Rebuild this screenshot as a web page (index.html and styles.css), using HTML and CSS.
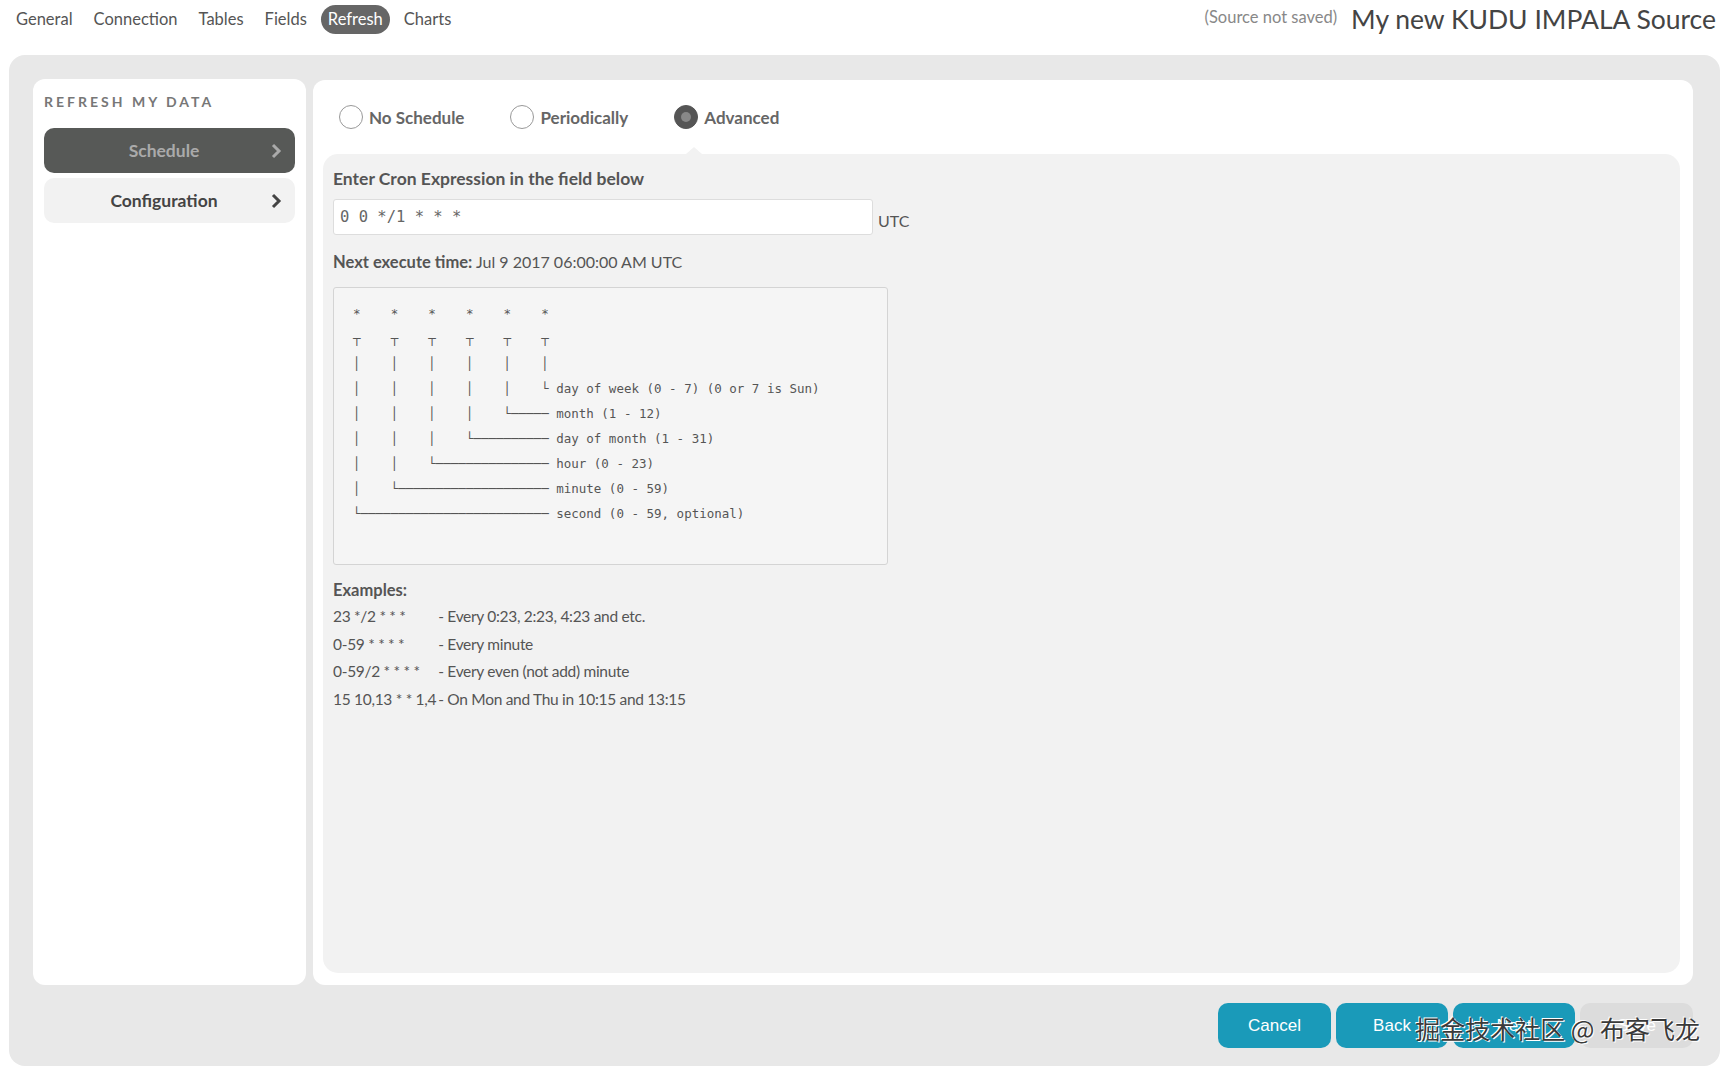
FILE: index.html
```html
<!DOCTYPE html>
<html lang="en">
<head>
    <meta charset="UTF-8">
    <title>Refresh - My new KUDU IMPALA Source</title>
    <link rel="stylesheet" href="styles.css">
</head>
<body>
    <div class="topbar">
        <ul class="tabs">
            <li>General</li>
            <li>Connection</li>
            <li>Tables</li>
            <li>Fields</li>
            <li class="active">Refresh</li>
            <li>Charts</li>
        </ul>
        <div class="source-name">
            <span class="not-saved">(Source not saved)</span>
            <span class="title">My new KUDU IMPALA Source</span>
        </div>
    </div>

    <div class="wizard">
        <div class="panels">
            <div class="sidebar">
                <h3>Refresh my data</h3>
                <div class="side-btn active">
                    <span>Schedule</span>
                    <svg width="12" height="16" viewBox="0 0 12 16"><polyline points="3,2 9,8 3,14" fill="none" stroke="currentColor" stroke-width="3"/></svg>
                </div>
                <div class="side-btn">
                    <span>Configuration</span>
                    <svg width="12" height="16" viewBox="0 0 12 16"><polyline points="3,2 9,8 3,14" fill="none" stroke="currentColor" stroke-width="3"/></svg>
                </div>
            </div>

            <div class="content">
                <div class="radios">
                    <label class="radio"><span class="circle"></span>No Schedule</label>
                    <label class="radio"><span class="circle"></span>Periodically</label>
                    <label class="radio checked"><span class="circle"></span>Advanced</label>
                </div>
                <div class="schedule-box">
                    <span class="notch"></span>
                    <div class="field-label">Enter Cron Expression in the field below</div>
                    <div class="cron-row">
                        <input type="text" class="cron-input" value="0 0 */1 * * *">
                        <span class="utc">UTC</span>
                    </div>
                    <div class="next-time"><b>Next execute time:</b> Jul 9 2017 06:00:00 AM UTC</div>
<pre class="cron-help">*    *    *    *    *    *
┬    ┬    ┬    ┬    ┬    ┬
│    │    │    │    │    │
│    │    │    │    │    └ day of week (0 - 7) (0 or 7 is Sun)
│    │    │    │    └───── month (1 - 12)
│    │    │    └────────── day of month (1 - 31)
│    │    └─────────────── hour (0 - 23)
│    └──────────────────── minute (0 - 59)
└───────────────────────── second (0 - 59, optional)</pre>
                    <div class="examples-title">Examples:</div>
                    <table class="examples">
                        <tr><td>23 */2 * * *</td><td>- Every 0:23, 2:23, 4:23 and etc.</td></tr>
                        <tr><td>0-59 * * * *</td><td>- Every minute</td></tr>
                        <tr><td>0-59/2 * * * *</td><td>- Every even (not add) minute</td></tr>
                        <tr><td>15 10,13 * * 1,4</td><td>- On Mon and Thu in 10:15 and 13:15</td></tr>
                    </table>
                </div>
            </div>
        </div>

        <div class="footer">
            <button class="btn btn-cancel">Cancel</button>
            <button class="btn btn-back">Back</button>
            <button class="btn btn-next">Next</button>
            <button class="btn btn-save" disabled>Save</button>
        </div>
    </div>

    <div class="watermark">掘金技术社区 @ 布客飞龙</div>
</body>
</html>
```

FILE: styles.css
```css
body {
    margin: 0;
    font-family: Lato, "Open Sans", sans-serif;
    color: #555;
    background-color: #fff;
    position: relative;
}
.topbar {
    display: flex;
    justify-content: space-between;
    align-items: center;
    height: 38px;
    padding: 0 9px;
}
.tabs {
    display: flex;
    gap: 7px;
    list-style: none;
    margin: 0;
    padding: 0;
    font-size: 16.5px;
}
.tabs li {
    padding: 5px 7px;
    line-height: 19px;
    border-radius: 15px;
    color: #555;
}
.tabs li.active {
    background-color: #666;
    color: #fff;
}
.source-name {
    display: flex;
    align-items: center;
    gap: 14px;
}
.not-saved {
    font-size: 16.5px;
    color: #888;
    margin-top: -4px;
}
.title {
    font-size: 26.5px;
    color: #444;
}
.wizard {
    margin: 17px 5px 0 9px;
    height: 1011px;
    box-sizing: border-box;
    padding: 24px 27px 0 24px;
    background-color: #e8e8e8;
    border-radius: 16px;
}
.panels {
    display: flex;
    gap: 7px;
    height: 906px;
}
.sidebar {
    width: 273px;
    box-sizing: border-box;
    padding: 13px 11px;
    background-color: #fff;
    border-radius: 12px;
}
.sidebar h3 {
    margin: 0 0 16px;
    font-size: 14px;
    line-height: 20px;
    letter-spacing: 3px;
    text-transform: uppercase;
    color: #777;
}
.side-btn {
    display: flex;
    align-items: center;
    height: 45px;
    margin-bottom: 5px;
    padding: 0 13px 0 14px;
    border-radius: 10px;
    background-color: #f2f2f2;
    color: #444;
    font-weight: bold;
    font-size: 17.5px;
}
.side-btn span {
    flex: 1;
    text-align: center;
}
.side-btn.active {
    background-color: #575957;
    color: #aaa;
}
.content {
    flex: 1;
    display: flex;
    flex-direction: column;
    margin-top: 1px;
    padding: 0 13px 12px 10px;
    background-color: #fff;
    border-radius: 12px;
}
.radios {
    display: flex;
    align-items: center;
    gap: 46px;
    height: 74px;
    padding-left: 16px;
}
.radio {
    display: flex;
    align-items: center;
    gap: 6px;
    font-weight: bold;
    font-size: 17px;
    color: #666;
}
.circle {
    width: 22px;
    height: 22px;
    border: 1.5px solid #999;
    border-radius: 50%;
    background-color: #fff;
    position: relative;
}
.radio.checked .circle {
    background-color: #555;
    border-color: #555;
}
.radio.checked .circle::after {
    content: "";
    position: absolute;
    left: 6px;
    top: 6px;
    width: 10px;
    height: 10px;
    border-radius: 50%;
    background-color: #888;
}
.schedule-box {
    flex: 1;
    position: relative;
    padding: 15px 10px;
    background-color: #f2f2f2;
    border-radius: 15px;
}
.notch {
    position: absolute;
    left: 363px;
    top: -7px;
    border-left: 8px solid transparent;
    border-right: 8px solid transparent;
    border-bottom: 7px solid #f2f2f2;
}
.field-label {
    font-weight: bold;
    font-size: 17.5px;
    line-height: 20px;
}
.cron-row {
    display: flex;
    align-items: center;
    gap: 5px;
    margin-top: 10px;
}
.cron-input {
    width: 540px;
    height: 36px;
    box-sizing: border-box;
    padding: 0 6px;
    border: 1px solid #ddd;
    border-radius: 3px;
    font-family: "DejaVu Sans Mono", monospace;
    font-size: 15.5px;
    color: #666;
}
.utc {
    margin-top: 6px;
    font-size: 16px;
}
.next-time {
    margin-top: 17px;
    font-size: 16px;
    line-height: 20px;
}
.next-time b {
    font-size: 16.5px;
    color: #555;
}
.cron-help {
    width: 555px;
    box-sizing: border-box;
    margin: 15px 0 0;
    padding: 13px 19px 38px;
    border: 1px solid #d4d4d4;
    border-radius: 3px;
    background-color: #f5f5f5;
    font-family: "DejaVu Sans Mono", monospace;
    font-size: 12.5px;
    line-height: 25px;
    color: #555;
}
.examples-title {
    margin-top: 15px;
    font-weight: bold;
    font-size: 16.5px;
    line-height: 20px;
}
.examples {
    border-collapse: collapse;
    margin-top: 3px;
    font-size: 15.5px;
    letter-spacing: -0.3px;
}
.examples td {
    padding: 0 2px 0 0;
    line-height: 27.5px;
    white-space: nowrap;
}
.footer {
    display: flex;
    justify-content: flex-end;
    gap: 5px;
    padding-top: 18px;
}
.btn {
    height: 45px;
    border: none;
    border-radius: 10px;
    background-color: #1a9ab9;
    color: #fff;
    font-family: "Liberation Sans", Arial, sans-serif;
    font-size: 17px;
    cursor: pointer;
}
.btn-cancel { width: 113px; }
.btn-back { width: 112px; }
.btn-next { width: 122px; }
.btn-save {
    width: 113px;
    background-color: #dcdcdc;
}
.watermark {
    position: absolute;
    top: 1010px;
    right: 25px;
    font-family: "Noto Sans CJK SC", sans-serif;
    font-size: 25px;
    color: #3a3a3a;
    text-shadow: 1px 1px 0 #fff, -1px -1px 0 #fff;
}
```
